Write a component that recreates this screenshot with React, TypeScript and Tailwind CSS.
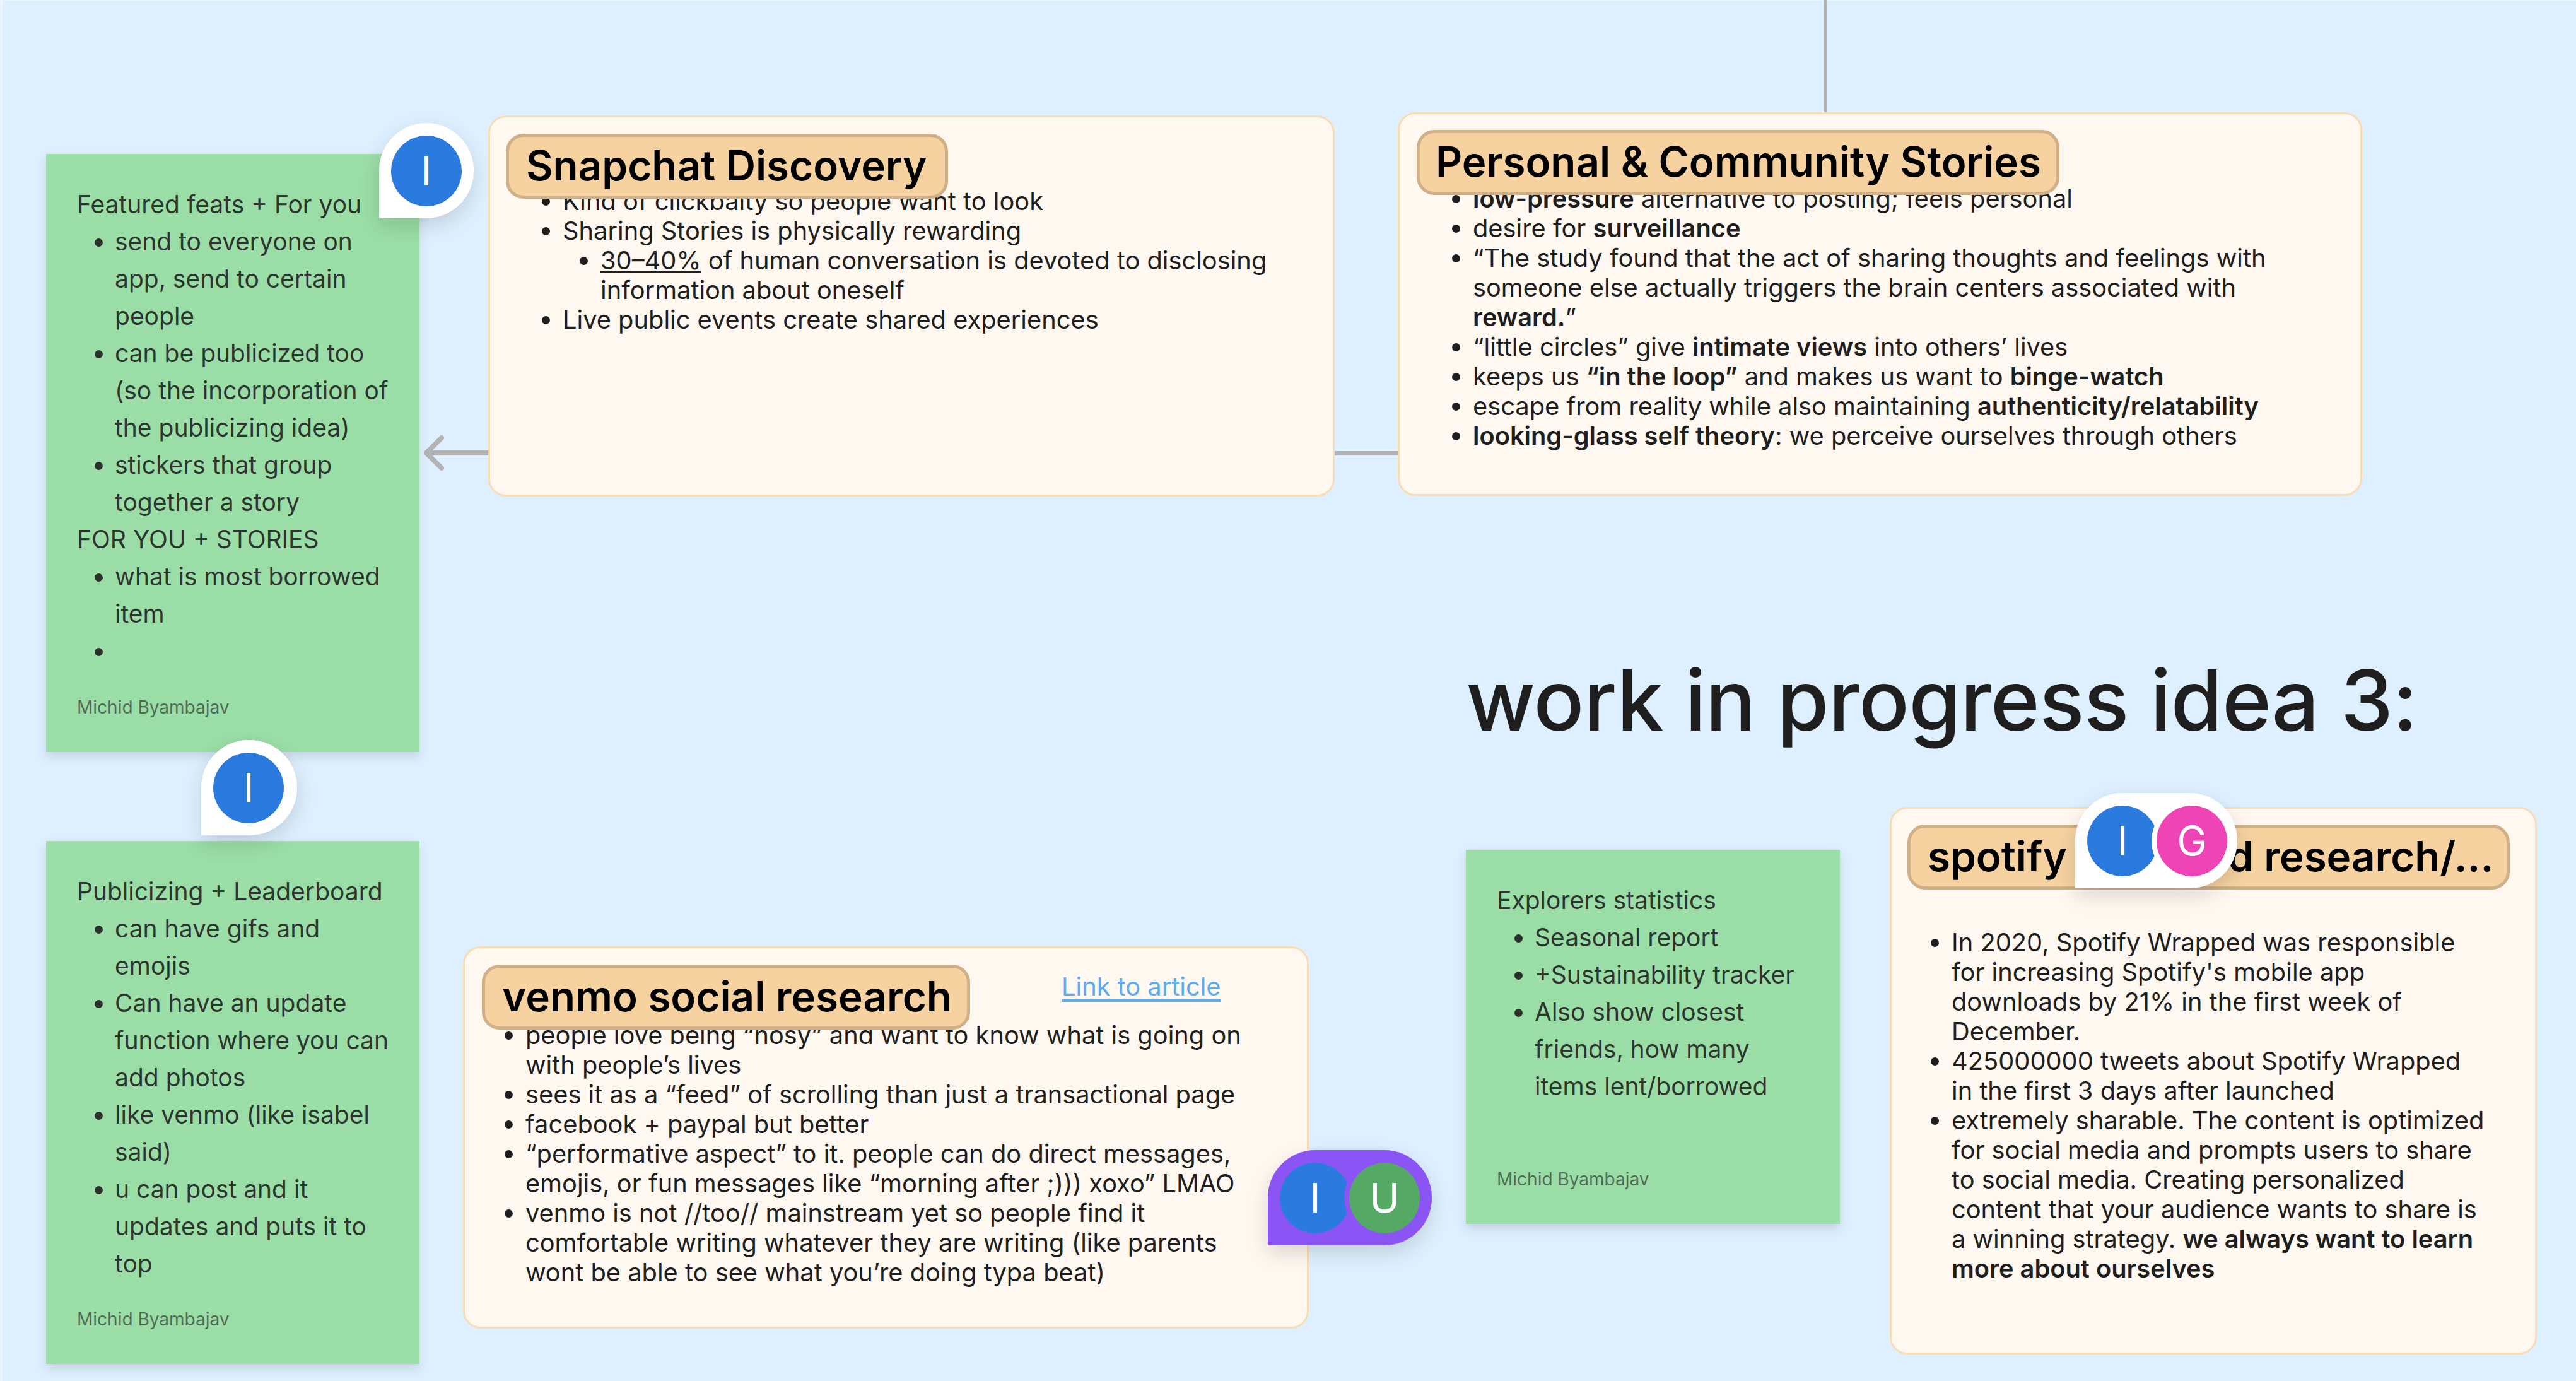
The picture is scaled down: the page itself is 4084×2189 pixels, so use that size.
const Note = ({
  className,
  children,
}: {
  className: string;
  children: React.ReactNode;
}) => (
  <section
    className={`absolute flex flex-col bg-[#9ADDA6] pt-[50px] pr-[40px] pb-[54px] pl-[49px] text-[39px] leading-[59px] text-[#1e1e1e]/90 shadow-[0_8px_16px_rgba(0,0,0,0.12)] ${className}`}
  >
    {children}
  </section>
);

const Author = () => (
  <p className="mt-auto text-[28px] leading-[34px] text-[#1e1e1e]/60">
    Michid Byambajav
  </p>
);

const Card = ({
  className,
  children,
}: {
  className: string;
  children: React.ReactNode;
}) => (
  <section
    className={`absolute rounded-[28px] border-[3px] border-[#F8DDB4] bg-[#FFF8F1] text-[39.8px] leading-[47px] text-[#1e1e1e] ${className}`}
  >
    {children}
  </section>
);

const Title = ({
  className,
  children,
}: {
  className: string;
  children: React.ReactNode;
}) => (
  <h2
    className={`relative z-10 flex h-[103px] items-center rounded-[28px] border-[5px] border-[#D0B088] bg-[#F5D2A0] pb-[2px] text-[65.5px] font-semibold whitespace-nowrap text-black ${className}`}
  >
    {children}
  </h2>
);

const Avatar = ({ letter, color }: { letter: string; color: string }) => (
  <div
    className={`flex h-[112px] w-[112px] shrink-0 items-center justify-center rounded-full text-[64px] leading-none font-normal text-white ${color}`}
  >
    {letter}
  </div>
);

const Cursor = ({
  className,
  children,
}: {
  className: string;
  children: React.ReactNode;
}) => (
  <div
    className={`absolute z-20 flex h-[151px] items-center rounded-[75px] rounded-bl-none pl-[19px] shadow-[0_12px_32px_rgba(0,0,0,0.14)] ${className}`}
  >
    {children}
  </div>
);

export default function App() {
  return (
    <main className="relative h-[2189px] w-[4084px] overflow-hidden bg-[#DEF0FF] font-['Inter',sans-serif]">
      <div className="absolute top-0 left-0 h-full w-[4px] bg-[#EAF5FF]" />
      <div className="absolute top-0 left-0 h-[1px] w-full bg-[#EAF5FF]" />

      {/* connectors */}
      <div className="absolute top-0 left-[2892px] h-[178px] w-[4px] bg-[#B3B3B3]" />
      <div className="absolute top-[715px] left-[2115px] h-[7px] w-[101px] bg-[#B3B3B3]" />
      <svg
        className="absolute top-[685px] left-[668px]"
        width="108"
        height="66"
        viewBox="0 0 108 66"
        fill="none"
        stroke="#B3B3B3"
        strokeWidth="8"
        strokeLinecap="round"
        strokeLinejoin="round"
      >
        <path d="M108 33H8M32 9L8 33l24 24" />
      </svg>

      <Note className="top-[244px] left-[73px] h-[948px] w-[592px]">
        <p>Featured feats + For you</p>
        <ul className="list-disc pl-[60px]">
          <li>send to everyone on app, send to certain people</li>
          <li>can be publicized too (so the incorporation of the publicizing idea)</li>
          <li>stickers that group together a story</li>
        </ul>
        <p>FOR YOU + STORIES</p>
        <ul className="list-disc pl-[60px]">
          <li>what is most borrowed item</li>
          <li>&nbsp;</li>
        </ul>
        <Author />
      </Note>

      <Note className="top-[1333px] left-[73px] h-[829px] w-[592px]">
        <p>Publicizing + Leaderboard</p>
        <ul className="list-disc pl-[60px]">
          <li>can have gifs and emojis</li>
          <li>Can have an update function where you can add photos</li>
          <li>like venmo (like isabel said)</li>
          <li>u can post and it updates and puts it to top</li>
        </ul>
        <Author />
      </Note>

      <Note className="top-[1347px] left-[2324px] h-[593px] w-[593px]">
        <p>Explorers statistics</p>
        <ul className="list-disc pl-[60px]">
          <li>Seasonal report</li>
          <li>+Sustainability tracker</li>
          <li>Also show closest friends, how many items lent/borrowed</li>
        </ul>
        <Author />
      </Note>

      <Card className="top-[183px] left-[774px] h-[604px] w-[1342px] pt-[26px] pl-[25px]">
        <Title className="w-[701px] pl-[27px]">Snapchat Discovery</Title>
        <ul className="mt-[-20px] list-disc pr-[60px] pl-[90px]">
          <li>Kind of clickbaity so people want to look</li>
          <li>
            Sharing Stories is physically rewarding
            <ul className="list-disc pl-[60px]">
              <li>
                <span className="underline">30–40%</span> of human conversation is devoted to
                disclosing information about oneself
              </li>
            </ul>
          </li>
          <li>Live public events create shared experiences</li>
        </ul>
      </Card>

      <Card className="top-[178px] left-[2216px] h-[608px] w-[1529px] pt-[25px] pl-[27px]">
        <Title className="w-[1019px] pl-[25px]">Personal &amp; Community Stories</Title>
        <ul className="mt-[-18px] list-disc pr-[120px] pl-[89px]">
          <li>
            <b className="font-semibold">low-pressure</b> alternative to posting; feels personal
          </li>
          <li>
            desire for <b className="font-semibold">surveillance</b>
          </li>
          <li>
            “The study found that the act of sharing thoughts and feelings with someone else
            actually triggers the brain centers associated with{' '}
            <b className="font-semibold">reward.</b>”
          </li>
          <li>
            “little circles” give <b className="font-semibold">intimate views</b> into others’ lives
          </li>
          <li>
            keeps us <b className="font-semibold">“in the loop”</b> and makes us want to{' '}
            <b className="font-semibold">binge-watch</b>
          </li>
          <li>
            escape from reality while also maintaining{' '}
            <b className="font-semibold">authenticity/relatability</b>
          </li>
          <li>
            <b className="font-semibold">looking-glass self theory</b>: we perceive ourselves
            through others
          </li>
        </ul>
      </Card>

      <h1 className="absolute top-[1030px] left-[2324px] text-[133px] leading-[160px] font-medium tracking-[-0.9px] whitespace-nowrap text-[#1e1e1e]">
        work in progress idea 3:
      </h1>

      <Card className="top-[1500px] left-[734px] h-[606px] w-[1341px] pt-[26px] pl-[27px]">
        <div className="flex items-start">
          <Title className="w-[774px] pl-[27px]">venmo social research</Title>
          <a className="mt-[11px] ml-[145px] text-[#5AACF5] underline decoration-[4px] underline-offset-[6px]">
            Link to article
          </a>
        </div>
        <ul className="mt-[-15px] list-disc pr-[70px] pl-[69px]">
          <li>people love being “nosy” and want to know what is going on with people’s lives</li>
          <li>sees it as a “feed” of scrolling than just a transactional page</li>
          <li>facebook + paypal but better</li>
          <li>
            “performative aspect” to it. people can do direct messages, emojis, or fun messages like
            “morning after ;))) xoxo” LMAO
          </li>
          <li>
            venmo is not //too// mainstream yet so people find it comfortable writing whatever they
            are writing (like parents wont be able to see what you’re doing typa beat)
          </li>
        </ul>
      </Card>

      <Card className="top-[1279px] left-[2996px] h-[868px] w-[1026px] pt-[25px] pl-[25px]">
        <Title className="w-[955px] pl-[27px]">spotify wrapped research/...</Title>
        <ul className="mt-[60px] list-disc pr-[76px] pl-[70px]">
          <li>
            In 2020, Spotify Wrapped was responsible for increasing Spotify's mobile app downloads
            by 21% in the first week of December.
          </li>
          <li>425000000 tweets about Spotify Wrapped in the first 3 days after launched</li>
          <li>
            extremely sharable. The content is optimized for social media and prompts users to share
            to social media. Creating personalized content that your audience wants to share is a
            winning strategy.{' '}
            <b className="font-semibold">we always want to learn more about ourselves</b>
          </li>
        </ul>
      </Card>

      <Cursor className="top-[195px] left-[601px] w-[150px] bg-white">
        <Avatar letter="I" color="bg-[#2B7BDE]" />
      </Cursor>
      <Cursor className="top-[1173px] left-[319px] w-[152px] bg-white">
        <Avatar letter="I" color="bg-[#2B7BDE]" />
      </Cursor>
      <Cursor className="top-[1823px] left-[2010px] w-[260px] bg-[#8B55F5]">
        <Avatar letter="I" color="bg-[#2B7BDE]" />
        <div className="ml-[-10px] rounded-full bg-[#8B55F5] p-[8px]">
          <Avatar letter="U" color="bg-[#55A964]" />
        </div>
      </Cursor>
      <Cursor className="top-[1257px] left-[3290px] w-[257px] bg-white">
        <Avatar letter="I" color="bg-[#2B7BDE]" />
        <div className="ml-[-10px] rounded-full bg-white p-[8px]">
          <Avatar letter="G" color="bg-[#EE44B5]" />
        </div>
      </Cursor>
    </main>
  );
}
